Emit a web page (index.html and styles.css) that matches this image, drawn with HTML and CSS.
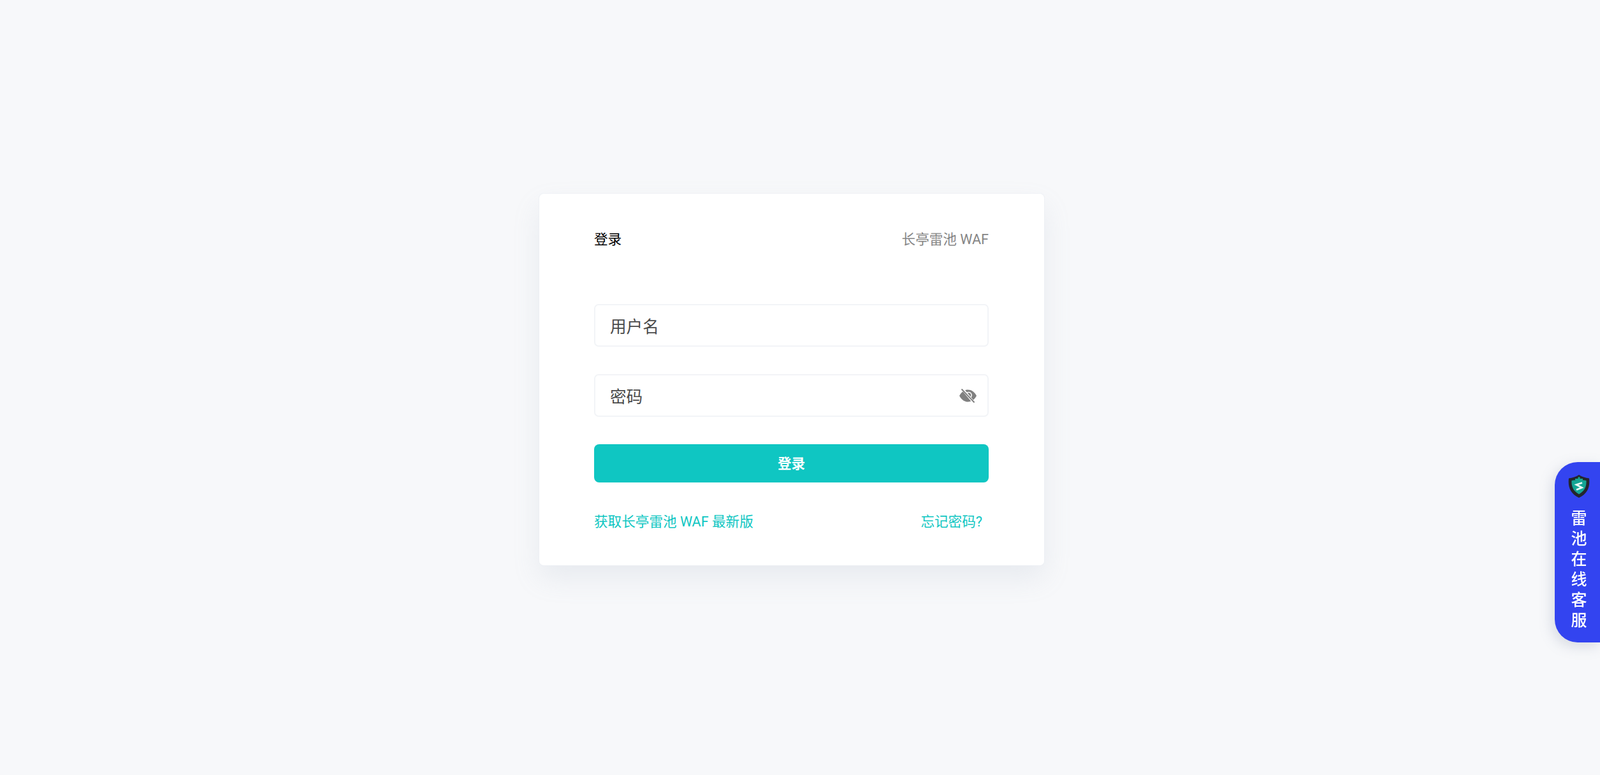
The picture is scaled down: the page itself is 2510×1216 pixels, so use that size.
FILE: index.html
```html
<!DOCTYPE html>
<html lang="zh-CN">
<head>
    <meta charset="UTF-8">
    <meta name="viewport" content="width=device-width, initial-scale=1.0">
    <title>登录 - 长亭雷池 WAF</title>
    <link rel="stylesheet" href="styles.css">
</head>
<body>
    <main class="page">
        <form class="login-card">
            <div class="card-head">
                <h2 class="card-title">登录</h2>
                <span class="card-brand">长亭雷池 WAF</span>
            </div>
            <div class="form-group">
                <input class="text-input" type="text" placeholder="用户名">
            </div>
            <div class="form-group password-group">
                <input class="text-input" type="password" placeholder="密码">
                <svg class="eye-icon" viewBox="0 0 27 22" width="27" height="22">
                    <path d="M0 11C4 4 8.500 1.500 13.500 1.500S23 4 27 11c-4 7-8.500 9.500-13.500 9.500S4 18 0 11z" fill="#808080"/>
                    <path d="M11 7a4.600 4.600 0 0 1 7 6" fill="none" stroke="#fff" stroke-width="1.500"/>
                    <path d="M4.500 0l18.500 22" stroke="#fff" stroke-width="4"/>
                    <path d="M3.500 .5l20 21" stroke="#808080" stroke-width="2"/>
                </svg>
            </div>
            <button class="submit-btn" type="button">登录</button>
            <div class="card-links">
                <a class="card-link" href="#">获取长亭雷池 WAF 最新版</a>
                <a class="card-link forgot-link" href="#">忘记密码?</a>
            </div>
        </form>
    </main>

    <a class="support-tab" href="#">
        <svg class="support-logo" viewBox="0 0 34 36" width="34" height="36">
            <path d="M17 0c4 3 10 4.500 16 5.500 1.500 13-2 24-16 30.500C3 29.500-.5 18.500 1 5.500 7 4.500 13 3 17 0z" fill="#24262c"/>
            <path d="M17 7c3 1 7 1.500 11.500 2 .5 9-2 16-11.500 21.500C7.500 25 5 18 5.500 9 10 8.500 14 8 17 7z" fill="#14a594"/>
            <path d="M15.500 3.500h3V6H23v2.500H11V6h4.500z" fill="#14a594"/>
            <path d="M22 12.500l-9 3 8.500 4.500-8.500 3.500" fill="none" stroke="#e8f8f5" stroke-width="2.800"/>
        </svg>
        <span class="support-text">雷池在线客服</span>
    </a>
</body>
</html>
```
FILE: styles.css
```css
* {
    box-sizing: border-box;
}

body {
    margin: 0;
    background-color: #f7f8fa;
    font-family: Roboto, "Noto Sans CJK SC", sans-serif;
    overflow: hidden;
}

.page {
    display: flex;
    justify-content: center;
    min-height: 100vh;
    padding: 304px 26px 0 0;
}

.login-card {
    width: 792px;
    height: 583px;
    padding: 0 87px 0 86px;
    background: #fff;
    border-radius: 7px;
    box-shadow: 0 0 0 1px rgba(235, 238, 243, 0.6), 0 20px 44px rgba(145, 155, 175, 0.14);
}

.card-head {
    display: flex;
    justify-content: space-between;
    align-items: center;
    height: 173px;
    padding-bottom: 34px;
    font-size: 21.6px;
}

.card-title {
    margin: 0;
    font-size: 21.6px;
    font-weight: 400;
    color: #000;
}

.card-brand {
    color: #858585;
}

.form-group {
    margin-bottom: 43px;
}

.password-group {
    position: relative;
}

.text-input {
    display: block;
    width: 100%;
    height: 67px;
    padding: 4px 23px 0;
    background: #fff;
    border: 2px solid #f2f4f7;
    border-radius: 7px;
    font-family: inherit;
    font-size: 25.6px;
    outline: none;
}

.text-input::placeholder {
    color: #4a4a4a;
    opacity: 1;
}

.eye-icon {
    position: absolute;
    top: 23px;
    right: 19px;
}

.submit-btn {
    display: block;
    width: 100%;
    height: 60px;
    padding: 0 0 3px;
    background-color: #0fc6c2;
    color: #fff;
    border: none;
    border-radius: 8px;
    font-family: inherit;
    font-size: 21.6px;
    font-weight: 700;
    cursor: pointer;
}

.card-links {
    display: flex;
    justify-content: space-between;
    margin-top: 44px;
    padding-right: 10px;
    font-size: 21.6px;
    line-height: 36px;
}

.card-link {
    color: #0fc6c2;
    text-decoration: none;
}

.support-tab {
    position: fixed;
    top: 725px;
    right: 0;
    display: flex;
    flex-direction: column;
    align-items: center;
    width: 71px;
    height: 283px;
    padding: 20px 0 0 5px;
    background-color: #3344f0;
    border-radius: 36px 0 0 36px;
    box-shadow: -4px 6px 20px rgba(120, 130, 160, 0.25);
    color: #fff;
    text-decoration: none;
}

.support-logo {
    flex: none;
}

.support-text {
    width: 26px;
    margin-top: 17px;
    font-size: 25px;
    font-weight: 500;
    line-height: 32px;
    text-align: center;
}
```
